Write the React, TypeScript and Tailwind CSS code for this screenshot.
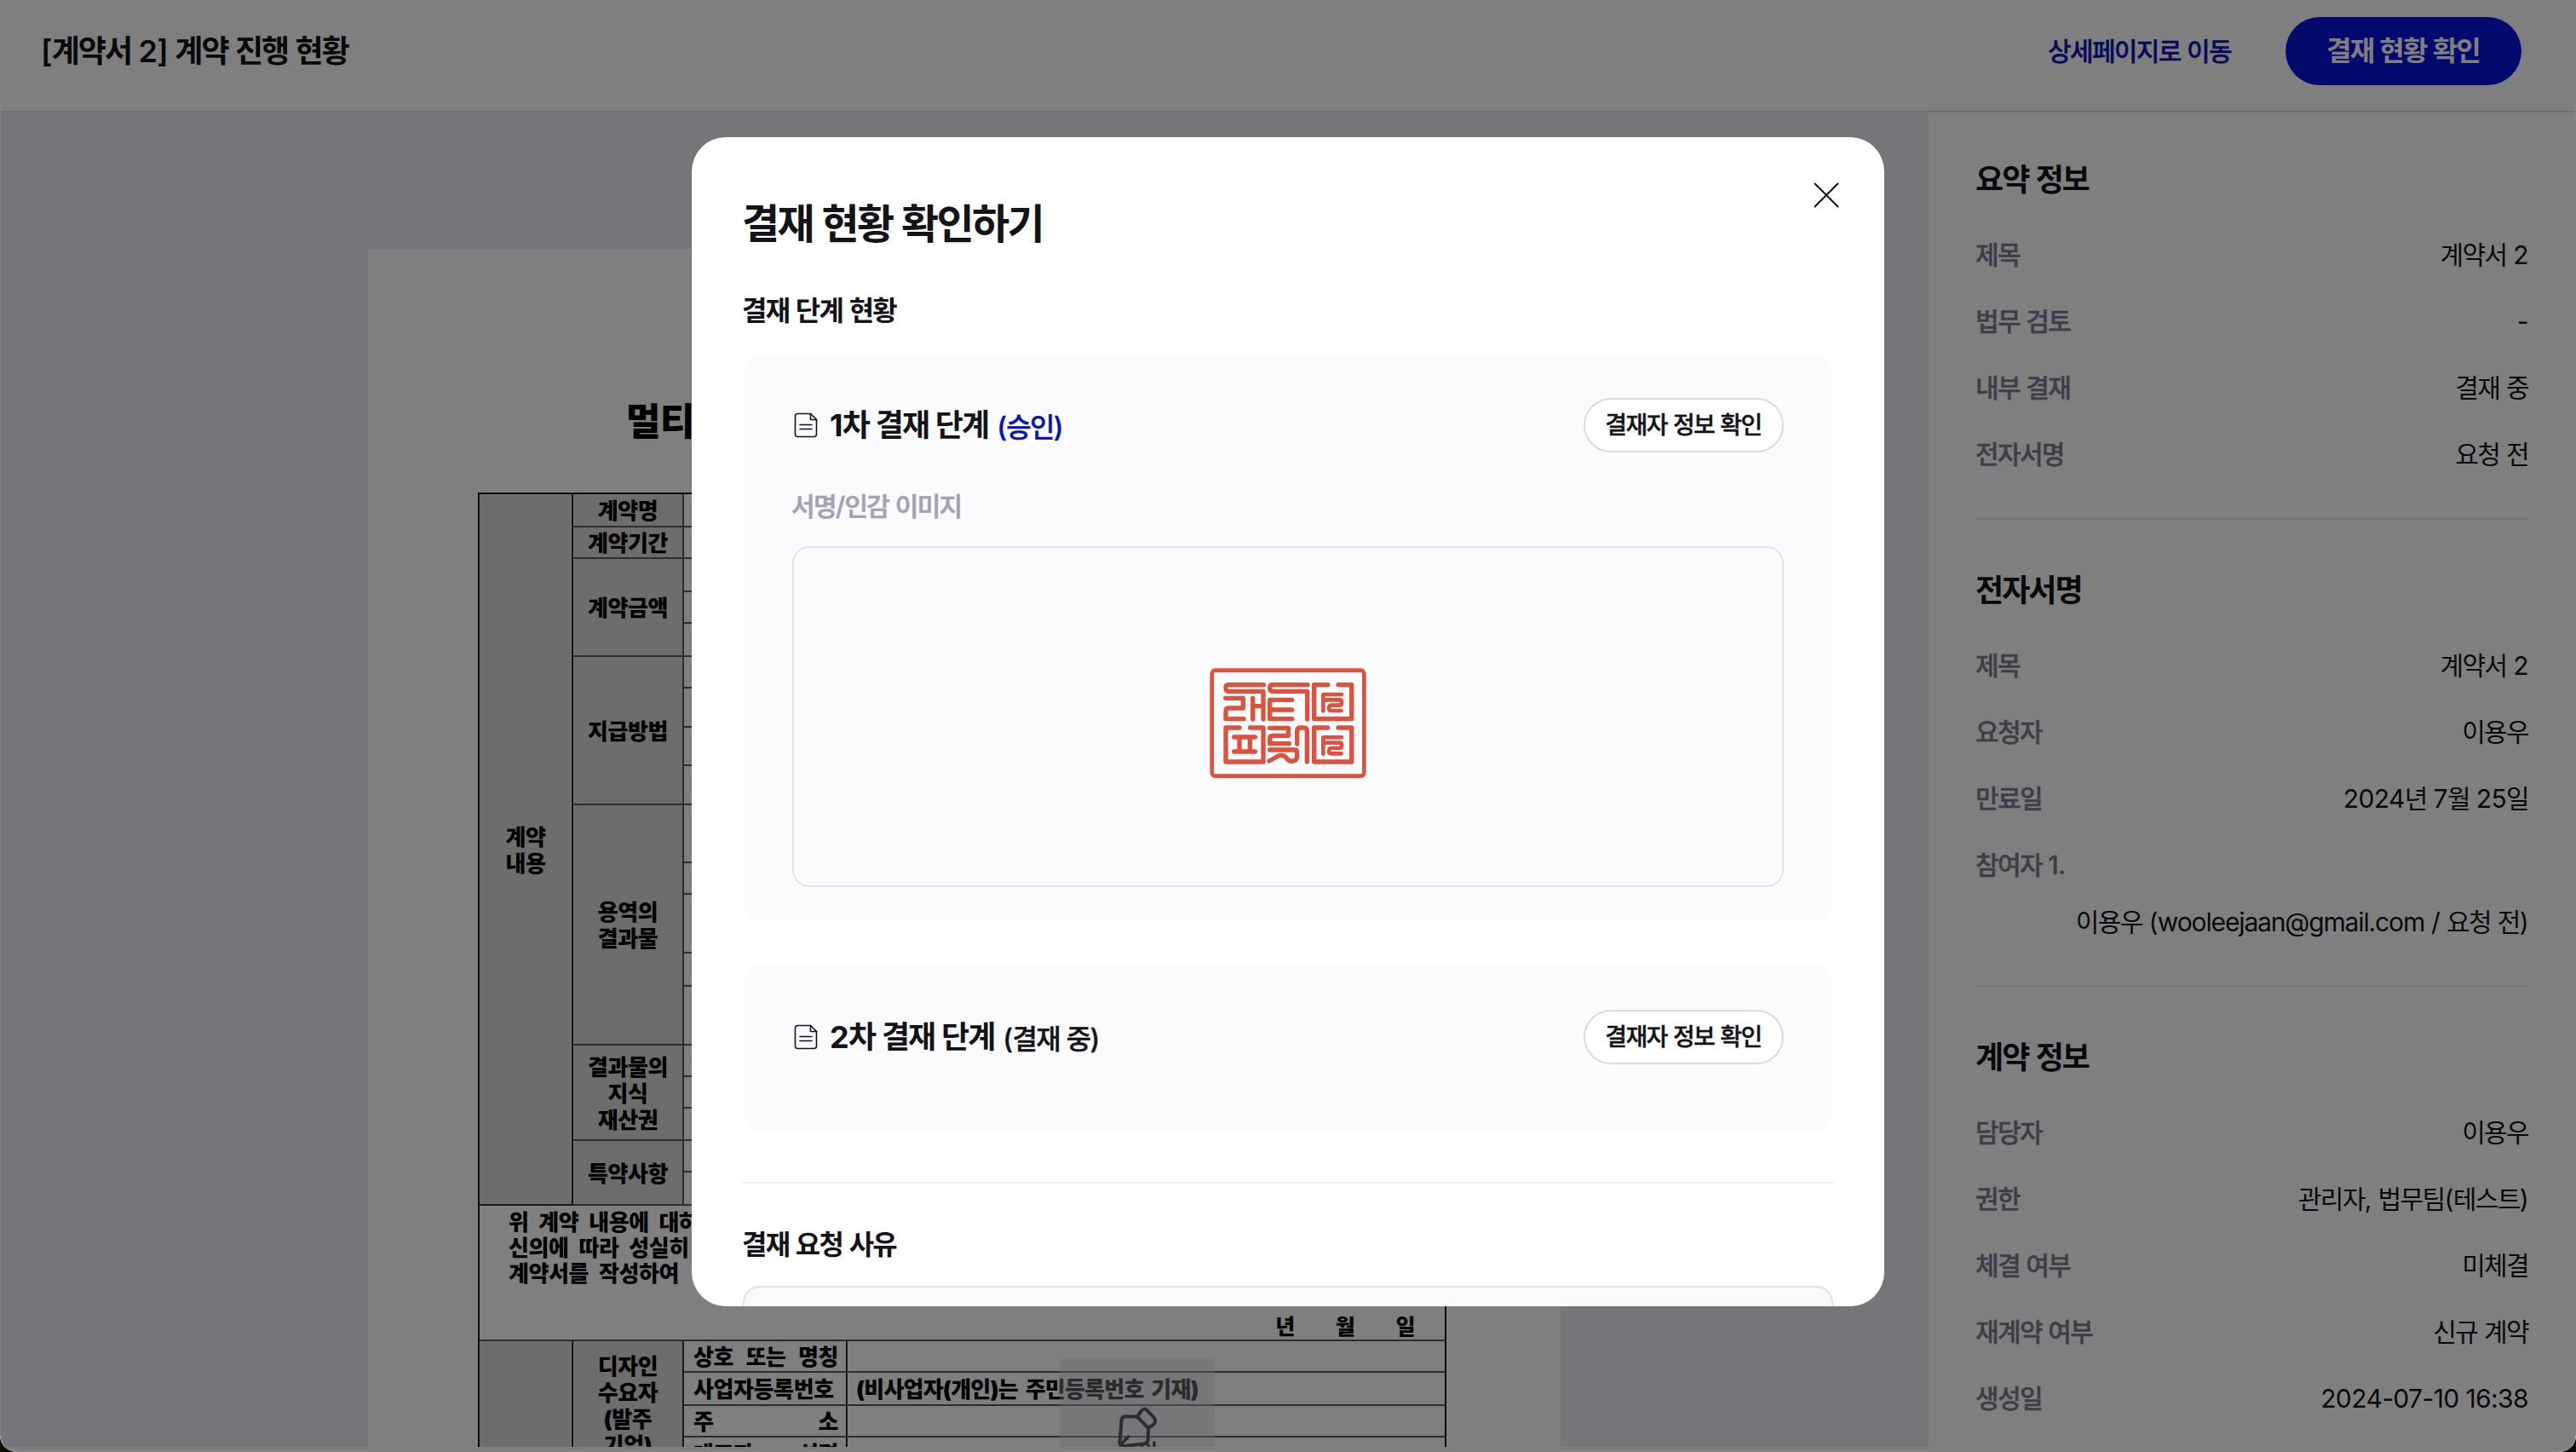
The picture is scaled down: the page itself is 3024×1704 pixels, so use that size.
import React from "react";

/* Sets Hangul runs, lower-case Latin runs and everything else with their own tracking. */
function T({ children }: { children: string }) {
  const parts = children.split(/([\uac00-\ud7a3]+|[a-z@.]{3,})/).filter(Boolean);
  return (
    <span className="-ml-px whitespace-pre tracking-[-0.02em]">
      {parts.map((p, i) =>
        /[\uac00-\ud7a3]/.test(p) ? (
          <span key={i} className="tracking-[-0.055em]">
            {p}
          </span>
        ) : /[a-z]/.test(p) ? (
          <span key={i} className="tracking-[-0.038em]">
            {p}
          </span>
        ) : (
          <React.Fragment key={i}>{p}</React.Fragment>
        )
      )}
    </span>
  );
}

function Header() {
  return (
    <header className="flex h-[132px] shrink-0 items-start justify-between border-b-2 border-[#dfdee6] bg-white pl-[49px] pr-16 pt-5">
      <h1 className="flex h-20 items-center text-[36px] font-semibold text-[#131318]">
        <T>[계약서 2] 계약 진행 현황</T>
      </h1>
      <div className="flex items-center gap-[64px]">
        <a className="text-[30px] font-medium text-[#0a14b4] [-webkit-text-stroke:0.4px]">
          <T>상세페이지로 이동</T>
        </a>
        <button className="flex h-20 w-[277px] items-center justify-center rounded-full bg-[#0813dc] text-[32px] font-bold text-white">
          <T>결재 현황 확인</T>
        </button>
      </div>
    </header>
  );
}

type Row = [string, string];

function InfoSection({ title, rows, children }: { title: string; rows: Row[]; children?: React.ReactNode }) {
  return (
    <section>
      <h2 className="mb-[22px] flex h-[54px] items-center text-[36px] font-semibold text-[#131318]">
        <T>{title}</T>
      </h2>
      <dl>
        {rows.map(([k, v]) => (
          <div key={k} className="flex h-[78px] items-center justify-between text-[30px]">
            <dt className="font-medium text-[#7c7a90] [-webkit-text-stroke:0.4px]">
              <T>{k}</T>
            </dt>
            <dd className="text-[#131318]">
              <T>{v}</T>
            </dd>
          </div>
        ))}
      </dl>
      {children}
    </section>
  );
}

function Sidebar() {
  return (
    <aside className="w-[760px] shrink-0 bg-white pl-14 pr-14 pt-[52px]">
      <InfoSection
        title="요약 정보"
        rows={[
          ["제목", "계약서 2"],
          ["법무 검토", "-"],
          ["내부 결재", "결재 중"],
          ["전자서명", "요청 전"],
        ]}
      />
      <hr className="mb-[56px] mt-[36px] border-0 border-t-2 border-[#e8e8ee]" />
      <InfoSection
        title="전자서명"
        rows={[
          ["제목", "계약서 2"],
          ["요청자", "이용우"],
          ["만료일", "2024년 7월 25일"],
          ["참여자 1.", ""],
        ]}
      >
        <p className="flex h-14 items-center justify-end text-[30px] text-[#131318]">
          <T>이용우 (wooleejaan@gmail.com / 요청 전)</T>
        </p>
      </InfoSection>
      <hr className="mb-[56px] mt-[46px] border-0 border-t-2 border-[#e8e8ee]" />
      <InfoSection
        title="계약 정보"
        rows={[
          ["담당자", "이용우"],
          ["권한", "관리자, 법무팀(테스트)"],
          ["체결 여부", "미체결"],
          ["재계약 여부", "신규 계약"],
          ["생성일", "2024-07-10 16:38"],
        ]}
      />
    </aside>
  );
}

function DocRow({ h, label, cells }: { h: string; label: string[]; cells: string[] }) {
  return (
    <div className={"flex " + h}>
      <div className="flex w-[130px] shrink-0 flex-col items-center justify-center border-b-2 border-r-2 border-[#5c5c5c] bg-[#dadada] pt-[2px] leading-[31px]">
        {label.map((l) => (
          <span key={l}>{l}</span>
        ))}
      </div>
      <div className="flex flex-1 flex-col">
        {cells.map((c, i) => (
          <div key={i} className={"border-b-2 border-[#5c5c5c] " + c} />
        ))}
      </div>
    </div>
  );
}

function PartyRow({ h, label, text }: { h: string; label: string[]; text?: string }) {
  return (
    <div className={"flex shrink-0 border-b-2 border-[#5c5c5c] " + h}>
      <div className="flex w-[192px] shrink-0 items-center justify-between border-r-2 border-[#333] pl-[11px] pr-[9px] pt-0.5">
        {label.map((l, i) => (
          <span key={i}>{l}</span>
        ))}
      </div>
      <div className="flex items-center whitespace-pre pl-[10px] pt-0.5 text-[26px] tracking-[-0.03em]">{text}</div>
    </div>
  );
}

function SignField() {
  return (
    <div className="absolute left-[812px] top-[1303px] h-[103px] w-[182px] overflow-hidden bg-[#d8d8e4]/40">
      <svg className="absolute left-0 top-0" width="182" height="103" viewBox="1244 1595 182 103" fill="none" stroke="#5a5a62" strokeWidth="4" strokeLinecap="round" strokeLinejoin="round">
        <path d="M1314.5 1692 L1316.5 1667 Q1317 1662.5 1321 1662.3 L1335 1662.6 L1339.5 1656 Q1343 1651.5 1347 1655.5 L1354.5 1663.5 Q1357.5 1667.5 1355 1671 L1348 1676 L1347.8 1689 Q1347.5 1693.5 1343.5 1694.3 L1320 1697 Q1314 1698 1314.5 1692 Z" />
        <path d="M1335 1662.6 L1348 1676 M1316 1695 L1324.5 1686" />
      </svg>
      <span className="absolute left-[93px] top-[97px] text-[24px] font-semibold leading-6 text-[#5a5a62]">인</span>
    </div>
  );
}

function DocumentPage() {
  return (
    <div className="relative ml-[432px] mt-40 h-[1406px] w-[1400px] overflow-hidden bg-white text-[26px] font-black leading-[31px] text-black tracking-[-0.015em]">
      <h2 className="ml-[303px] mt-[178px] h-[50px] text-[44px] leading-[50px]">멀티</h2>
      <div className="ml-[129px] mt-[58px] flex w-[1137px] flex-col border-2 border-b-0 border-[#1a1a1a]">
        <div className="flex">
          <div className="flex w-[110px] shrink-0 flex-col items-center justify-center border-b-2 border-r-2 border-[#333] bg-[#dadada] pt-[2px]">
            <span>계약</span>
            <span>내용</span>
          </div>
          <div className="flex-1">
            <DocRow h="h-[39px]" label={["계약명"]} cells={["flex-1"]} />
            <DocRow h="h-[37px]" label={["계약기간"]} cells={["flex-1"]} />
            <DocRow h="h-[115px]" label={["계약금액"]} cells={["h-[39px]", "h-[37px]", "flex-1"]} />
            <DocRow h="h-[174px]" label={["지급방법"]} cells={["h-[37px]", "h-[46px]", "h-[45px]", "flex-1"]} />
            <DocRow h="h-[282px]" label={["용역의", "결과물"]} cells={["h-[68px]", "h-[37px]", "h-[69px]", "h-[39px]", "flex-1"]} />
            <DocRow h="h-[112px]" label={["결과물의", "지식", "재산권"]} cells={["h-[37px]", "h-[37px]", "flex-1"]} />
            <DocRow h="h-[76px]" label={["특약사항"]} cells={["h-[37px]", "flex-1"]} />
          </div>
        </div>
        <div className="flex h-[159px] flex-col border-b-2 border-[#5c5c5c] pl-[34px] pt-[5px]">
          <div className="whitespace-pre leading-[30px] [word-spacing:7px]">
            <p>위 계약 내용에 대하여</p>
            <p>신의에 따라 성실히</p>
            <p>계약서를 작성하여</p>
          </div>
          <div className="mt-[32px] flex justify-end gap-[48px] pr-[35px] text-[25px]">
            <span>년</span>
            <span>월</span>
            <span>일</span>
          </div>
        </div>
        <div className="flex h-[260px]">
          <div className="w-[110px] shrink-0 border-r-2 border-[#333] bg-[#dadada]" />
          <div className="flex w-[130px] shrink-0 flex-col items-center border-r-2 border-[#333] bg-[#dadada] pt-[14px]">
            <span>디자인</span>
            <span>수요자</span>
            <span>(발주</span>
            <span>기업)</span>
          </div>
          <div className="flex flex-1 flex-col">
            <PartyRow h="h-[37px]" label={["상호", "또는", "명칭"]} />
            <PartyRow h="h-[39px]" label={["사업자등록번호"]} text="(비사업자(개인)는  주민등록번호  기재)" />
            <PartyRow h="h-[37px]" label={["주", "소"]} />
            <PartyRow h="h-[39px]" label={["대표자", "성명"]} />
          </div>
        </div>
      </div>
      <SignField />
    </div>
  );
}

function DocIcon() {
  return (
    <svg className="ml-[2px]" width="28" height="30" viewBox="0 0 28 30" fill="none" stroke="#131318" strokeWidth="1.6" strokeLinejoin="round" strokeLinecap="round">
      <path d="M4 1.5 H19.5 L26.5 8.5 V25.5 Q26.5 28.5 23.5 28.5 H4.5 Q1.5 28.5 1.5 25.5 V4.5 Q1.5 1.5 4.5 1.5 Z" />
      <path d="M19.5 1.5 V8.5 H26.5" />
      <path d="M7 14.5 H21 M7 19.5 H21" />
    </svg>
  );
}

function StepHeader({ title, status, statusClass }: { title: string; status: string; statusClass: string }) {
  return (
    <div className="flex h-16 items-center justify-between">
      <div className="flex items-center">
        <DocIcon />
        <h4 className="ml-[15px] text-[36px] font-bold leading-[48px] text-[#131318]">
          <T>{title}</T>
        </h4>
        <span className={"ml-[11px] mt-[5px] text-[32px] font-medium leading-[44px] [-webkit-text-stroke:0.4px] " + statusClass}>
          <T>{status}</T>
        </span>
      </div>
      <button className="flex h-16 w-[235px] items-center justify-center rounded-full border-2 border-[#d9dae5] bg-white text-[28px] font-medium text-[#131318] [-webkit-text-stroke:0.4px]">
        <T>결재자 정보 확인</T>
      </button>
    </div>
  );
}

/* Red seal drawing */
function Seal() {
  return (
    <svg width="184" height="130" viewBox="60 43 552 390" fill="none" stroke="#dd513d" strokeLinecap="round" strokeLinejoin="round" strokeWidth="16">
      <rect x="68" y="51" width="536" height="372" rx="12" strokeWidth="14" />
      <path d="M250 102 H124 Q117 102 117 113 Q117 125 126 125 H249 V223 M116 149 H178 V184 H127 Q117 184 117 195 V222 H180 M212 149 V223 M212 177 H249" />
      <path d="M405 102 H280 Q272 102 272 113 Q272 125 281 125 H404 V223 M350 155 H272 V222 H350 M272 190 H350" />
      <path d="M476 102 H428 V222 H560 V102 H513" />
      <path d="M525 136 H460 V194 M460 155 H520 Q525 155 525 164 Q525 174 518 174 H490 Q480 174 480 184 Q480 193 488 193 H524" strokeWidth="14" />
      <path d="M165 253 H117 V373 H249 V253 H203 M146 286 H220 M146 337 H220 M165 286 V337 M202 286 V337" />
      <path d="M272 254 H337 V281 H282 Q272 281 272 292 V309 H340 M272 331 H360 Q368 331 368 342 V354 Q367 370 350 371 Q338 371 332 362 L326 355 Q316 348 303 352 L270 370 M368 310 V265 Q368 253 381 253 H390 Q403 253 403 266 V373" />
      <path d="M476 253 H428 V373 H560 V253 H513" />
      <path d="M525 287 H460 V345 M460 306 H520 Q525 306 525 315 Q525 325 518 325 H490 Q480 325 480 335 Q480 344 488 344 H524" strokeWidth="14" />
    </svg>
  );
}

function Modal() {
  return (
    <div className="flex h-[1372px] w-[1400px] flex-col overflow-hidden rounded-[40px] bg-white px-[60px] pt-[54px]">
      <div className="flex h-24 items-start justify-between">
        <h2 className="flex h-24 items-center text-[48px] font-bold text-[#131318]">
          <T>결재 현황 확인하기</T>
        </h2>
        <button className="-mt-px mr-[-7px]" aria-label="닫기">
          <svg width="30" height="30" viewBox="0 0 30 30" stroke="#131318" strokeWidth="2" strokeLinecap="round">
            <path d="M1.5 1.5 L28.5 28.5 M28.5 1.5 L1.5 28.5" />
          </svg>
        </button>
      </div>
      <h3 className="mt-[30px] flex h-12 items-center text-[32px] font-semibold text-[#131318]">
        <T>결재 단계 현황</T>
      </h3>
      <section className="mx-[2px] mt-[26px] h-[666px] shrink-0 rounded-[20px] bg-[#fafbfd] px-[56px] pt-[52px]">
        <StepHeader title="1차 결재 단계" status="(승인)" statusClass="text-[#0a14b4]" />
        <p className="mt-[43px] flex h-10 items-center text-[30px] font-medium text-[#a3a2b4] [-webkit-text-stroke:0.7px]">
          <T>서명/인감 이미지</T>
        </p>
        <div className="mt-[27px] flex h-[400px] items-center justify-center rounded-[20px] border-2 border-[#e4e4ec] pt-[15px]">
          <Seal />
        </div>
      </section>
      <section className="mx-[2px] mt-[52px] h-[196px] shrink-0 rounded-[20px] bg-[#fafbfd] px-[56px] pt-[52px]">
        <StepHeader title="2차 결재 단계" status="(결재 중)" statusClass="text-[#131318]" />
      </section>
      <hr className="mt-[58px] shrink-0 border-0 border-t-2 border-[#ececf2]" />
      <h3 className="mt-[48px] flex h-12 shrink-0 items-center text-[32px] font-semibold text-[#131318]">
        <T>결재 요청 사유</T>
      </h3>
      <div className="mt-[24px] h-[200px] shrink-0 rounded-[20px] border-2 border-[#e2e2ea] bg-[#fafafa]" />
    </div>
  );
}

export default function App() {
  return (
    <div className="h-[1704px] w-[3024px] overflow-hidden bg-[#111008] [font-family:Inter,'Noto_Sans_CJK_KR',sans-serif]">
      <div className="relative flex h-[1704px] w-[3024px] flex-col overflow-hidden rounded-b-[20px] bg-white">
        <Header />
        <div className="flex h-[1566px] overflow-hidden">
          <main className="w-[2264px] shrink-0 overflow-hidden bg-[#ebeaf4]">
            <DocumentPage />
          </main>
          <Sidebar />
        </div>
        <div className="absolute inset-0 flex items-start justify-center rounded-b-[20px] border-x border-b border-[#8a8a8a]/60 bg-black/50 pt-[161px]">
          <Modal />
        </div>
      </div>
    </div>
  );
}
